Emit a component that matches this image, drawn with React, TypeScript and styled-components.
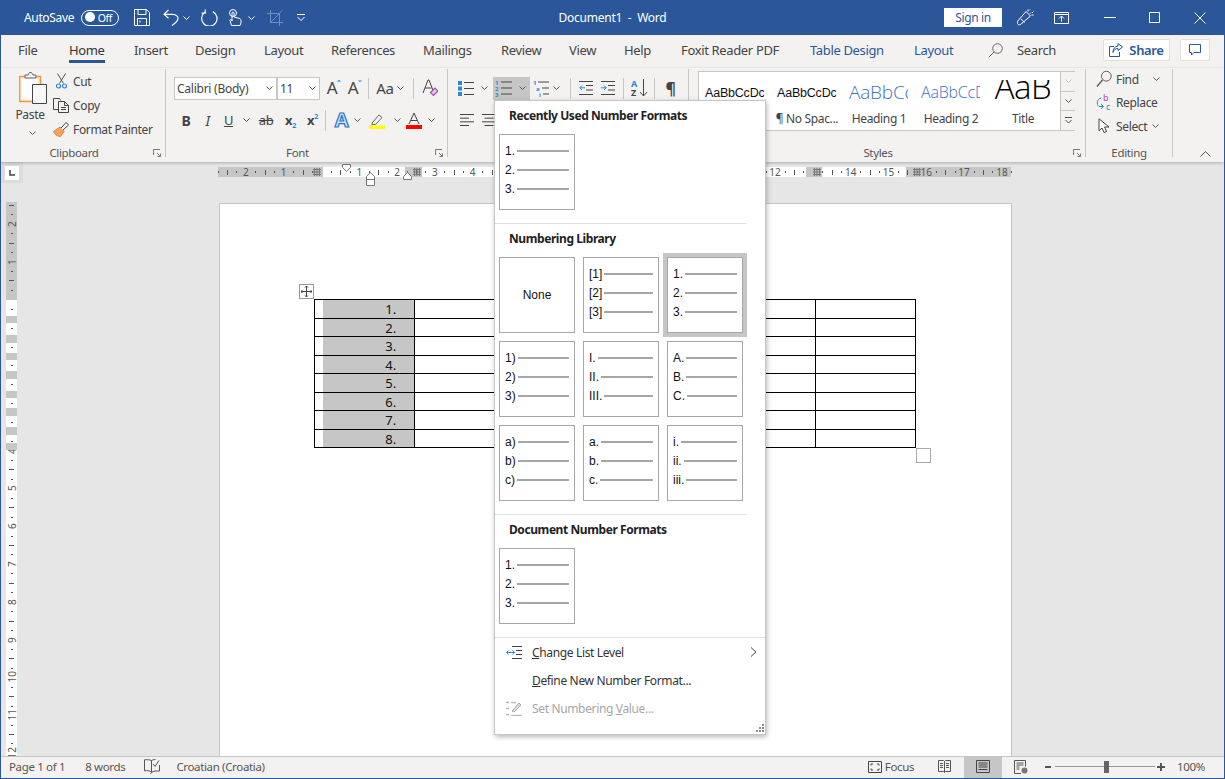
import {FC, ReactNode} from 'react'
import styled, {createGlobalStyle} from 'styled-components'

const BLUE = '#2b579a'
const RULE = '#c6c6c6'
const INK = '#444'

const GlobalStyle = createGlobalStyle`
  html, body {
    margin: 0;
    height: 100%;
    overflow: hidden;
    font-family: 'Noto Sans', 'Open Sans', sans-serif;
    font-size: 12px;
    letter-spacing: -0.35px;
    color: ${INK};
  }
  #root { height: 100%; }
`

const TABS = [
  {label: 'File', width: 51},
  {label: 'Home', width: 65, active: true},
  {label: 'Insert', width: 61},
  {label: 'Design', width: 69},
  {label: 'Layout', width: 67},
  {label: 'References', width: 92},
  {label: 'Mailings', width: 78},
  {label: 'Review', width: 68},
  {label: 'View', width: 55},
  {label: 'Help', width: 57},
  {label: 'Foxit Reader PDF', width: 129},
  {label: 'Table Design', width: 104, context: true},
  {label: 'Layout', width: 75, context: true},
]

const UNIT = 37.8
const H_ZERO = 103.5
const V_ZERO = 97.3
const H_WHITE = [[105, 187], [204, 588], [604, 688]]
const H_COLUMNS = [95, 195, 595, 695]
const V_TABLE_MARKERS = [[113.5, 121], [133, 140.5], [151, 158], [169, 176.5], [189, 196], [206, 214], [225, 232.5], [240.5, 247.5]]
const H_NUMBERS: Record<number, number> = {
  [-2]: 2, [-1]: 1, 1: 1, 2: 2, 3: 3, 4: 4, 12: 12, 14: 14, 15: 15, 16: 16, 17: 17, 18: 18,
}

const quarterSteps = (from: number, to: number) => {
  const steps: number[] = []
  for (let q = from; q <= to; q++) steps.push(q)
  return steps
}

const Chevron: FC<{$ml?: number; color?: string}> = ({$ml, color = '#555'}) => (
  <Ico $ml={$ml} width="7" height="4" viewBox="0 0 7 4" fill="none" stroke={color}>
    <path d="M.5.5 3.5 3.5 6.5.5" />
  </Ico>
)

const SmallLauncher: FC = () => (
  <Launcher width="8" height="8" viewBox="0 0 8 8" fill="none" stroke="#777">
    <path d="M.5 6V.5H7M4 4l3.5 3.5M7.5 4.5v3h-3" />
  </Launcher>
)

const Lines: FC<{rows: [number, number][]; width?: number; height?: number; $ml?: number}> = ({rows, width = 14, height = 14, $ml}) => (
  <Ico $ml={$ml} width={width} height={height} viewBox={`0 0 ${width} ${height}`} stroke="#444">
    {rows.map(([x, w], i) => (
      <path key={i} d={`M${x} ${1.5 + i * ((height - 3) / (rows.length - 1))}h${w}`} />
    ))}
  </Ico>
)

const PreviewTile: FC<{labels: string[]; selected?: boolean}> = ({labels, selected}) => (
  <Tile $selected={selected}>
    {labels.map((label) => (
      <TileRow key={label}>
        {label}
        <TileLine />
      </TileRow>
    ))}
  </Tile>
)

const Accel: FC<{children: ReactNode}> = ({children}) => <u>{children}</u>

const TitleBarView: FC = () => (
  <TitleBar>
    <Qat>
      <span>AutoSave</span>
      <Toggle><Knob />Off</Toggle>
      <Ico $ml={15} width="16" height="17" viewBox="0 0 16 17" fill="none" stroke="#fff">
        <path d="M.5.5h12l3 3v13H.5zM4 .5v5h8v-5M3.5 16.5v-7h9v7M6 11.5v2" />
      </Ico>
      <Ico $ml={13} width="16" height="17" viewBox="0 0 16 17" fill="none" stroke="#fff" strokeWidth="1.2">
        <path d="M5.5.8 1 5.3l4.5 4M1.3 5.3h8c3 0 5.7 1.6 5.7 4.2 0 2.9-3 4.9-6 7" />
      </Ico>
      <Chevron $ml={4} color="#fff" />
      <Ico $ml={11} width="17" height="17" viewBox="0 0 17 17" fill="none" stroke="#fff" strokeWidth="1.2">
        <path d="M11.8 2.6A7.7 7.7 0 1 1 4.2 3M4.2.6v3.6H.6" />
      </Ico>
      <Ico $ml={11} width="13" height="17" viewBox="0 0 13 17" fill="none" stroke="#fff">
        <circle cx="4" cy="4" r="3.5" />
        <path d="M2.5 16.5 1 11.5c0-1 1-1.400 1.800-.3L3 12V4c0-1.300 2-1.300 2 0v4l5 1.300c1.500.5 2 1.200 2 2.500v2l-1 2.700z" />
      </Ico>
      <Chevron $ml={6} color="#fff" />
      <Ico $ml={12} width="16" height="16" viewBox="0 0 16 16" fill="none" stroke="#6f8fc0">
        <path d="M3.500 0v12.500H16M0 3.500h12.500V16M12.500 3.500 3.500 12.500M15 .5l-2.500 3" />
      </Ico>
      <Ico $ml={14} width="8" height="7" viewBox="0 0 8 7" fill="none" stroke="#fff">
        <path d="M0 .5h8M.5 3l3.500 3.500L7.500 3" />
      </Ico>
    </Qat>
    <DocTitle>Document1  -  Word</DocTitle>
    <WindowTools>
      <SignIn>Sign in</SignIn>
      <Ico $ml={15} width="17" height="17" viewBox="0 0 17 17" fill="none" stroke="#fff">
        <path d="M.8 12 9 2.500l4.500 4.500L3.500 15.500c-3 1-3.500-1-2.700-3.500zM4 10l3.500 3.500M12 1.500l1-1M15 4l1.500-1.500M13 4.500l1-1M11 .5v2M16.500 6h-2" />
      </Ico>
      <Ico $ml={20} width="15" height="12" viewBox="0 0 15 12" fill="none" stroke="#fff">
        <path d="M.5.500h14v11H.500zM.5 2.500h14M7.500 9.500V4.500M5 6.500 7.500 4 10 6.500" />
      </Ico>
      <Ico $ml={35} width="12" height="1" viewBox="0 0 12 1" stroke="#fff"><path d="M0 .5h12" /></Ico>
      <Ico $ml={33} width="11" height="11" viewBox="0 0 11 11" fill="none" stroke="#fff"><path d="M.5.500h10v10H.500z" /></Ico>
      <Ico $ml={34} width="12" height="12" viewBox="0 0 12 12" fill="none" stroke="#fff"><path d="m.5.500 11 11M11.500.500l-11 11" /></Ico>
    </WindowTools>
  </TitleBar>
)

const TabBarView: FC = () => (
  <TabBar>
    {TABS.map((tab) => (
      <Tab key={tab.label + tab.width} $width={tab.width} $context={tab.context}>
        <TabLabel $active={tab.active}>{tab.label}</TabLabel>
      </Tab>
    ))}
    <SearchBox>
      <Ico width="15" height="15" viewBox="0 0 15 15" fill="none" stroke="#666">
        <circle cx="9.500" cy="5.500" r="4.800" />
        <path d="M6 9 .8 14.200" />
      </Ico>
      Search
    </SearchBox>
    <ShareButton>
      <Ico width="14" height="14" viewBox="0 0 14 14" fill="none" stroke={BLUE}>
        <path d="M5 3.500H.5v10h10V9M9 .5l4.500 3.500L9 7.500V5.500c-3 0-4.500 1.500-5 4 0-3.500 1.500-6 5-6.500z" />
      </Ico>
      Share
    </ShareButton>
    <CommentButton>
      <Ico width="12" height="12" viewBox="0 0 12 12" fill="none" stroke={BLUE}>
        <path d="M.5.500h11v8H5L2.500 11V8.500h-2z" />
      </Ico>
    </CommentButton>
  </TabBar>
)

const RibbonView: FC = () => (
  <Ribbon>
    <Group $width={165}>
      <ClipboardBody>
        <PasteColumn>
          <Ico $ml={11} width="28" height="32" viewBox="0 0 28 32" fill="none">
            <path d="M.5 4.500h21v25H.5z" fill="#fbe4c8" stroke="#ef9b3d" strokeWidth="1.500" />
            <path d="M2.500 6.500h17v21h-17z" fill="#fff" />
            <path d="M6 5V3h3l1.500-2.500h2L14 3h3v3H6z" fill="#f3f2f1" stroke="#666" />
            <path d="M13.500 12.500h14v19h-14z" fill="#f8f8f8" stroke="#444" />
          </Ico>
          <PasteLabel>Paste</PasteLabel>
          <Chevron $ml={21} />
        </PasteColumn>
        <ClipRows>
          <ClipRow>
            <ClipIcon>
              <svg width="11" height="16" viewBox="0 0 11 16" fill="none">
                <path d="M1.500.5 7.500 10.500M9.500.5l-6 10" stroke="#555" />
                <circle cx="2.500" cy="13" r="2" stroke="#2b88d8" strokeWidth="1.200" />
                <circle cx="8.500" cy="13" r="2" stroke="#2b88d8" strokeWidth="1.200" />
              </svg>
            </ClipIcon>
            Cut
          </ClipRow>
          <ClipRow>
            <ClipIcon>
              <svg width="16" height="15" viewBox="0 0 16 15" fill="none" stroke="#444">
                <path d="M5 11.500H.5V.5h6l1 2" />
                <path d="M5.500 3.500h6l4 4v7h-10zM11.500 3.500v4h4M8 9.500h5M8 11.500h5" />
              </svg>
            </ClipIcon>
            Copy
          </ClipRow>
          <ClipRow>
            <ClipIcon>
              <svg width="16" height="15" viewBox="0 0 16 15" fill="none">
                <path d="M.5 9.500 7 5l4 4.500L7.500 14.500c-3 0-6-2-7-5z" fill="#f7a35c" stroke="#e8833a" />
                <path d="m8 6 5-5.500 2.500 2.500L10 8" fill="#fff" stroke="#444" />
              </svg>
            </ClipIcon>
            Format Painter
          </ClipRow>
        </ClipRows>
      </ClipboardBody>
      <GroupLabel>Clipboard</GroupLabel>
      <SmallLauncher />
    </Group>

    <Group $width={282}>
      <ToolStack $left={8}>
        <ToolRow>
          <Combo $width={103}>Calibri (Body)<Chevron /></Combo>
          <Combo $width={43}>11<Chevron /></Combo>
          <Tool $ml={7} $w={13}><GrowA>A<Caret>ˆ</Caret></GrowA></Tool>
          <Tool $ml={8} $w={13}><GrowA>A<Caret>ˇ</Caret></GrowA></Tool>
          <ToolSep $ml={7} />
          <Tool $ml={8} $w={16} $size={15}>Aa</Tool>
          <Tool $ml={4} $w={7}><Chevron /></Tool>
          <ToolSep $ml={9} />
          <Tool $ml={8} $w={16}>
            <svg width="16" height="18" viewBox="0 0 16 18" fill="none">
              <path d="M1 14 6 1h1l5 13M3 9h6.500" stroke="#444" />
              <path d="m8.500 13.500 4.500-4.500 3 3-4.500 4.500z" fill="#e6c8ea" stroke="#a64dab" strokeWidth="1.200" />
            </svg>
          </Tool>
        </ToolRow>
        <ToolRow>
          <Tool $ml={8} $w={8} $size={14} $weight={700}>B</Tool>
          <Tool $ml={14} $w={7} $size={14} $italic>I</Tool>
          <Tool $ml={13} $w={9} $size={13} $underline>U</Tool>
          <Tool $ml={10} $w={7}><Chevron /></Tool>
          <Tool $ml={8} $w={16} $size={13} $strike>ab</Tool>
          <Tool $ml={11} $w={11}><Script>x<Sub>2</Sub></Script></Tool>
          <Tool $ml={11} $w={11}><Script>x<Sup>2</Sup></Script></Tool>
          <ToolSep $ml={7} />
          <Tool $ml={7} $w={17}><EffectA>A</EffectA></Tool>
          <Tool $ml={4} $w={7}><Chevron /></Tool>
          <Tool $ml={8} $w={16}>
            <svg width="16" height="17" viewBox="0 0 16 17" fill="none">
              <path d="m3 11 7-8 3 2.500-6.500 7H3.500zM3.500 12 2 13.500" stroke="#666" />
              <path d="M0 13.500h16V17H0z" fill="#ffff00" />
            </svg>
          </Tool>
          <Tool $ml={9} $w={7}><Chevron /></Tool>
          <Tool $ml={5} $w={16}>
            <svg width="16" height="17" viewBox="0 0 16 17" fill="none">
              <path d="m3 12 5-11 5 11M4.800 8.500h6.500" stroke="#444" />
              <path d="M0 13h16v4H0z" fill="#f00" />
            </svg>
          </Tool>
          <Tool $ml={6} $w={7}><Chevron /></Tool>
        </ToolRow>
      </ToolStack>
      <GroupLabel>Font</GroupLabel>
      <SmallLauncher />
    </Group>

    <Group $width={241}>
      <ToolStack $left={0}>
        <ToolRow>
          <Tool $ml={10} $w={16}>
            <svg width="16" height="15" viewBox="0 0 16 15" fill="none">
              <path d="M0 0h4v4H0zM0 5.500h4v4H0zM0 11h4v4H0z" fill="#2b88d8" />
              <path d="M6 1.500h10M6 7.500h10M6 13.500h10" stroke="#444" />
            </svg>
          </Tool>
          <Tool $ml={7} $w={7}><Chevron /></Tool>
          <ActiveTool>
            <svg width="17" height="19" viewBox="0 0 17 19" fill="none">
              <text x="0" y="6" fontSize="6" fontWeight="700" fill="#2b88d8">1</text>
              <text x="0" y="12" fontSize="6" fontWeight="700" fill="#2b88d8">2</text>
              <text x="0" y="18" fontSize="6" fontWeight="700" fill="#2b88d8">3</text>
              <path d="M6 3h11M6 9h11M6 15h11" stroke="#444" />
            </svg>
            <Chevron $ml={7} />
          </ActiveTool>
          <Tool $ml={3} $w={16}>
            <svg width="16" height="19" viewBox="0 0 16 19" fill="none">
              <text x="0" y="6" fontSize="6" fontWeight="700" fill="#2b88d8">1</text>
              <text x="3" y="12" fontSize="6" fontWeight="700" fill="#2b88d8">a</text>
              <text x="6" y="18" fontSize="6" fontWeight="700" fill="#2b88d8">i</text>
              <path d="M5 3h11M9 9h7M10 15h6" stroke="#444" />
            </svg>
          </Tool>
          <Tool $ml={4} $w={7}><Chevron /></Tool>
          <ToolSep $ml={10} />
          <Tool $ml={8} $w={14}>
            <svg width="14" height="14" viewBox="0 0 14 14" fill="none">
              <path d="M0 .5h14M7 4.500h7M7 9h7M0 13.500h14" stroke="#444" />
              <path d="M6 6.800H.8M3 4.500.8 6.800 3 9" stroke="#2b88d8" />
            </svg>
          </Tool>
          <Tool $ml={8} $w={14}>
            <svg width="14" height="14" viewBox="0 0 14 14" fill="none">
              <path d="M0 .5h14M7 4.500h7M7 9h7M0 13.500h14" stroke="#444" />
              <path d="M0 6.800h5.200M3 4.500l2.200 2.300L3 9" stroke="#2b88d8" />
            </svg>
          </Tool>
          <ToolSep $ml={8} />
          <Tool $ml={7} $w={17}>
            <svg width="17" height="20" viewBox="0 0 17 20" fill="none">
              <text x="0" y="9" fontSize="9" fontWeight="700" fill="#2b88d8">A</text>
              <text x="0" y="18" fontSize="9" fontWeight="700" fill="#444">Z</text>
              <path d="M12.500 1v16.500M9 14l3.500 4 3.500-4" stroke="#444" />
            </svg>
          </Tool>
          <ToolSep $ml={6} />
          <Tool $ml={10} $w={11} $size={16} $weight={700}>¶</Tool>
        </ToolRow>
        <ToolRow>
          <Lines $ml={12} rows={[[0, 14], [0, 9], [0, 14], [0, 9]]} />
          <Lines $ml={8} rows={[[0, 14], [2.5, 9], [0, 14], [2.5, 9]]} />
        </ToolRow>
      </ToolStack>
    </Group>

    <Group $width={397}>
      <Gallery>
        <StyleCell $sample="normal"><span>AaBbCcDc</span><span>¶ Normal</span></StyleCell>
        <StyleCell $sample="normal"><span>AaBbCcDc</span><span>¶ No Spac...</span></StyleCell>
        <StyleCell $sample="h1"><span>AaBbCc</span><span>Heading 1</span></StyleCell>
        <StyleCell $sample="h2"><span>AaBbCcD</span><span>Heading 2</span></StyleCell>
        <StyleCell $sample="title"><span>AaB</span><span>Title</span></StyleCell>
        <ScrollColumn>
          <ScrollButton><Chevron color="#c6c6c6" /></ScrollButton>
          <ScrollButton><Chevron /></ScrollButton>
          <ScrollButton>
            <svg width="7" height="7" viewBox="0 0 7 7" fill="none" stroke="#555"><path d="M0 .5h7M.5 3l3 3 3-3" /></svg>
          </ScrollButton>
        </ScrollColumn>
      </Gallery>
      <GroupLabel>Styles</GroupLabel>
      <SmallLauncher />
    </Group>

    <Group $width={87}>
      <EditRows>
        <EditRow>
          <ClipIcon>
            <svg width="17" height="18" viewBox="0 0 17 18" fill="none" stroke="#555">
              <circle cx="11" cy="6" r="5.200" />
              <path d="M7 10 1 17" strokeWidth="1.400" />
            </svg>
          </ClipIcon>
          Find<Chevron $ml={14} />
        </EditRow>
        <EditRow>
          <ClipIcon>
            <svg width="16" height="19" viewBox="0 0 16 19" fill="none">
              <text x="7" y="8" fontSize="9" fill="#a64dab">b</text>
              <text x="10" y="17" fontSize="9" fill="#2b88d8">c</text>
              <path d="M5 5C1 6 0 11 3 13.500h4M5 11l2.500 2.500L5 16" stroke="#2b88d8" />
            </svg>
          </ClipIcon>
          Replace
        </EditRow>
        <EditRow>
          <ClipIcon>
            <svg width="12" height="16" viewBox="0 0 12 16" fill="#fff" stroke="#444">
              <path d="M1 .8v12l3-2.800 2 4.500 2.500-1-2-4.500h4.500z" />
            </svg>
          </ClipIcon>
          Select<Chevron $ml={5} />
        </EditRow>
      </EditRows>
      <GroupLabel $centered>Editing</GroupLabel>
    </Group>

    <CollapseSlot>
      <Ico width="11" height="6" viewBox="0 0 11 6" fill="none" stroke="#555"><path d="m.5 5.500 5-5 5 5" /></Ico>
    </CollapseSlot>
  </Ribbon>
)

const HorizontalRuler: FC = () => (
  <HRuler>
    {H_WHITE.map(([from, to]) => (
      <HWhite key={from} style={{left: from, width: to - from}} />
    ))}
    {quarterSteps(-11, 73).map((q) => {
      const left = H_ZERO + (q / 4) * UNIT
      if (q % 4 === 0) {
        const n = H_NUMBERS[q / 4]
        return n ? <HNumber key={q} style={{left}}>{n}</HNumber> : null
      }
      return q % 2 === 0 ? <HTick key={q} style={{left}} /> : <HDot key={q} style={{left}} />
    })}
    {H_COLUMNS.map((left) => (
      <ColumnMark key={left} style={{left}} width="8" height="8" viewBox="0 0 8 8" stroke="#777" fill="none">
        <path d="M0 1.500h8M0 4h8M0 6.500h8M1.500 0v8M4 0v8M6.500 0v8" />
      </ColumnMark>
    ))}
    <FirstIndent width="9" height="8" viewBox="0 0 9 8" fill="#fff" stroke="#777">
      <path d="M.5.500h8v3l-4 4-4-4z" />
    </FirstIndent>
    <HangIndent width="9" height="14" viewBox="0 0 9 14" fill="#fff" stroke="#777">
      <path d="M.5 7.500v-3l4-4 4 4v3zM.5 7.500h8v6h-8z" />
    </HangIndent>
    <RightIndent width="9" height="8" viewBox="0 0 9 8" fill="#fff" stroke="#777">
      <path d="M.5 7.500v-3l4-4 4 4v3z" />
    </RightIndent>
  </HRuler>
)

const VerticalRuler: FC = () => (
  <VRuler>
    <VGrey style={{top: 0, height: 98}} />
    {quarterSteps(-10, 49).map((q) => {
      const top = V_ZERO + (q / 4) * UNIT
      if (q === 0) return null
      if (q % 4 === 0) return <VNumber key={q} style={{top}}>{Math.abs(q / 4)}</VNumber>
      return q % 2 === 0 ? <VTick key={q} style={{top}} /> : <VDot key={q} style={{top}} />
    })}
    {V_TABLE_MARKERS.map(([from, to]) => (
      <VGrey key={from} style={{top: from, height: to - from}} />
    ))}
  </VRuler>
)

const NumberMenu: FC = () => (
  <Menu>
    <MenuHeading>Recently Used Number Formats</MenuHeading>
    <TileGrid>
      <PreviewTile labels={['1.', '2.', '3.']} />
    </TileGrid>
    <MenuRule />
    <MenuHeading>Numbering Library</MenuHeading>
    <TileGrid>
      <NoneTile>None</NoneTile>
      <PreviewTile labels={['[1]', '[2]', '[3]']} />
      <PreviewTile labels={['1.', '2.', '3.']} selected />
      <PreviewTile labels={['1)', '2)', '3)']} />
      <PreviewTile labels={['I.', 'II.', 'III.']} />
      <PreviewTile labels={['A.', 'B.', 'C.']} />
      <PreviewTile labels={['a)', 'b)', 'c)']} />
      <PreviewTile labels={['a.', 'b.', 'c.']} />
      <PreviewTile labels={['i.', 'ii.', 'iii.']} />
    </TileGrid>
    <MenuRule />
    <MenuHeading>Document Number Formats</MenuHeading>
    <TileGrid>
      <PreviewTile labels={['1.', '2.', '3.']} />
    </TileGrid>
    <MenuRule $full />
    <MenuItem>
      <MenuIcon>
        <svg width="16" height="13" viewBox="0 0 16 13" fill="none">
          <path d="M6 .5h10M10 4.500h6M10 8.500h6M6 12.500h10" stroke="#444" />
          <path d="M.5 6.500h8M2.500 4.500l-2 2 2 2M6.500 4.500l2 2-2 2" stroke="#2b88d8" />
        </svg>
      </MenuIcon>
      <span><Accel>C</Accel>hange List Level</span>
      <SubArrow width="7" height="10" viewBox="0 0 7 10" fill="none" stroke="#444"><path d="m1 .5 5 4.500-5 4.500" /></SubArrow>
    </MenuItem>
    <MenuItem>
      <MenuIcon />
      <span><Accel>D</Accel>efine New Number Format...</span>
    </MenuItem>
    <MenuItem $disabled>
      <MenuIcon>
        <svg width="16" height="15" viewBox="0 0 16 15" fill="none">
          <path d="M0 1.500h3M0 7.500h3M0 13.500h3M5 14.500h11M5 1.500h5" stroke="#bbb" strokeWidth="1.500" />
          <path d="m6 10 7-8 2 2-7 7z" fill="#ddd" stroke="#aaa" />
        </svg>
      </MenuIcon>
      <span>Set Numbering <Accel>V</Accel>alue...</span>
    </MenuItem>
    <MenuFooter>
      <Ico width="8" height="8" viewBox="0 0 8 8" fill="#888">
        <path d="M6 0h2v2H6zM3 3h2v2H3zM6 3h2v2H6zM0 6h2v2H0zM3 6h2v2H3zM6 6h2v2H6z" />
      </Ico>
    </MenuFooter>
  </Menu>
)

const StatusBarView: FC = () => (
  <StatusBar>
    <StatusText $ml={8}>Page 1 of 1</StatusText>
    <StatusText $ml={20}>8 words</StatusText>
    <Ico $ml={19} width="16" height="15" viewBox="0 0 16 15" fill="none" stroke="#555">
      <path d="M7.500 1.500C6 .8 3 .5.500.8v11c2.500-.3 5.500 0 7 1.200v-11.500zM7.500 1.500c1-.7 2.500-1 4-1M15.500 6v6c-2.500-.3-6.500 0-8 1.500L6.500 15M9 5l2 2.500 4-6" />
    </Ico>
    <StatusText $ml={16}>Croatian (Croatia)</StatusText>
    <StatusRight>
      <Ico width="14" height="12" viewBox="0 0 14 12" fill="none" stroke="#444">
        <path d="M.5.500h13v11H.500zM3 4.500V3h2M9 3h2v1.500M3 7.500V9h2M11 7.500V9H9" />
      </Ico>
      <StatusText $ml={3}>Focus</StatusText>
      <Ico $ml={24} width="13" height="14" viewBox="0 0 13 14" fill="none" stroke="#555">
        <path d="M.5.500h5l1 1 1-1h5v11h-5l-1 1-1-1h-5zM6.500 1.500v11M2 3.500h3M2 5.500h3M2 7.500h3M8 3.500h3M8 5.500h3M8 7.500h3" />
      </Ico>
      <ViewActive>
        <svg width="14" height="13" viewBox="0 0 14 13" fill="none" stroke="#444">
          <path d="M.5.500h13v12H.500zM2.500 3h9M2.500 5h9M2.500 7h9M2.500 9.500h9" />
        </svg>
      </ViewActive>
      <Ico $ml={12} width="14" height="14" viewBox="0 0 14 14" fill="none" stroke="#555">
        <path d="M7 13.500H.5V.500h11v6M2.500 3h7M2.500 5h7M2.500 7h3M2.500 9h3" />
        <circle cx="10.500" cy="10.500" r="3" fill="#777" stroke="none" />
      </Ico>
      <ZoomMinus />
      <ZoomTrack $w={49} />
      <ZoomThumb />
      <ZoomTrack $w={46} />
      <ZoomPlus />
      <StatusText $ml={12}>100%</StatusText>
    </StatusRight>
  </StatusBar>
)

export default function App() {
  return (
    <Window>
      <GlobalStyle />
      <TitleBarView />
      <TabBarView />
      <RibbonView />
      <Workspace>
        <LeftRail>
          <TabStop>
            <TabStopFace>
              <svg width="6" height="6" viewBox="0 0 6 6" fill="none" stroke="#444" strokeWidth="1.500"><path d="M1 0v5h5" /></svg>
            </TabStopFace>
          </TabStop>
          <VerticalRuler />
        </LeftRail>
        <Canvas>
          <HorizontalRuler />
          <Page>
            <DocTable>
              <MoveHandle>
                <svg width="11" height="11" viewBox="0 0 11 11" fill="none" stroke="#444">
                  <path d="M5.500 0v11M0 5.500h11M4 1.500 5.500 0 7 1.500M4 9.500 5.500 11 7 9.500M1.500 4 0 5.500 1.500 7M9.500 4 11 5.500 9.500 7" />
                </svg>
              </MoveHandle>
              {[1, 2, 3, 4, 5, 6, 7, 8].map((n) => (
                <TableRow key={n}>
                  <NumberCell><NumberFill>{n}.</NumberFill></NumberCell>
                  <Cell /><Cell /><Cell /><Cell /><Cell />
                </TableRow>
              ))}
              <ResizeHandle />
            </DocTable>
          </Page>
        </Canvas>
      </Workspace>
      <StatusBarView />
      <NumberMenu />
    </Window>
  )
}

const Window = styled.div`
  position: relative;
  box-sizing: border-box;
  display: flex;
  flex-direction: column;
  height: 100vh;
  overflow: hidden;
  border: 1px solid ${BLUE};
  border-top: 0;
  background: #e6e6e6;
`

const Ico = styled.svg<{$ml?: number}>`
  display: block;
  flex: none;
  margin-left: ${(p) => p.$ml ?? 0}px;
`

const TitleBar = styled.header`
  display: grid;
  grid-template-columns: 1fr auto 1fr;
  align-items: center;
  height: 35px;
  flex: none;
  margin: 0 -1px;
  background: ${BLUE};
  color: #fff;
`

const Qat = styled.div`
  display: flex;
  align-items: center;
  padding-left: 24px;
  font-size: 12px;
`

const Toggle = styled.span`
  position: relative;
  box-sizing: border-box;
  display: flex;
  align-items: center;
  justify-content: flex-end;
  width: 38px;
  height: 16px;
  margin-left: 7px;
  padding-right: 6px;
  border: 1.500px solid #fff;
  border-radius: 8px;
  font-size: 10.500px;
`

const Knob = styled.i`
  position: absolute;
  left: 3px;
  top: 1.500px;
  width: 10px;
  height: 10px;
  border-radius: 50%;
  background: #fff;
`

const DocTitle = styled.div`
  font-size: 12px;
  white-space: pre;
  letter-spacing: -0.25px;
`

const WindowTools = styled.div`
  display: flex;
  align-items: center;
  justify-content: flex-end;
  padding-right: 19px;
`

const SignIn = styled.span`
  display: flex;
  align-items: center;
  justify-content: center;
  width: 58px;
  height: 19px;
  background: #fff;
  color: ${BLUE};
  font-size: 12px;
`

const TabBar = styled.nav`
  display: flex;
  align-items: flex-start;
  flex: none;
  height: 33px;
  padding: 6px 0 0 17px;
  box-sizing: border-box;
  background: #f3f2f1;
  font-size: 13px;
`

const Tab = styled.div<{$width: number; $context?: boolean}>`
  flex: none;
  width: ${(p) => p.$width}px;
  color: ${(p) => (p.$context ? BLUE : INK)};
`

const TabLabel = styled.span<{$active?: boolean}>`
  display: inline-block;
  line-height: 19px;
  border-bottom: 3px solid ${(p) => (p.$active ? BLUE : 'transparent')};
  color: ${(p) => (p.$active ? '#333' : 'inherit')};
`

const SearchBox = styled.div`
  display: flex;
  align-items: center;
  gap: 14px;
  flex: none;
  width: 115px;
  height: 18px;
  margin-left: -1px;
`

const ShareButton = styled.button`
  display: flex;
  align-items: center;
  justify-content: center;
  gap: 6px;
  box-sizing: border-box;
  flex: none;
  width: 67px;
  height: 22px;
  margin-top: -2px;
  padding: 0;
  border: 1px solid #e1dfdd;
  border-radius: 2px;
  background: #fff;
  color: ${BLUE};
  font: 600 13px 'Noto Sans', sans-serif;
  letter-spacing: -0.35px;
`

const CommentButton = styled.button`
  display: flex;
  align-items: center;
  justify-content: center;
  box-sizing: border-box;
  flex: none;
  width: 30px;
  height: 22px;
  margin: -2px 0 0 10px;
  padding: 0;
  border: 1px solid #e1dfdd;
  border-radius: 2px;
  background: #fff;
`

const Ribbon = styled.section`
  position: relative;
  z-index: 1;
  display: flex;
  flex: none;
  height: 94px;
  box-shadow: 0 1px 3px rgba(0, 0, 0, 0.25);
  background: #f3f2f1;
`

const Group = styled.div<{$width: number}>`
  position: relative;
  display: flex;
  flex-direction: column;
  box-sizing: border-box;
  flex: none;
  width: ${(p) => p.$width}px;
  height: 88px;
  margin-top: 1px;
  border-right: 1px solid ${RULE};
`

const GroupLabel = styled.div<{$centered?: boolean}>`
  flex: none;
  height: 11px;
  padding-right: ${(p) => (p.$centered ? 0 : 18)}px;
  line-height: 14px;
  text-align: center;
  font-size: 11.500px;
  color: #555;
`

const Launcher = styled.svg`
  position: absolute;
  right: 4px;
  bottom: 0;
`

const ClipboardBody = styled.div`
  display: flex;
  flex: 1;
`

const PasteColumn = styled.div`
  flex: none;
  width: 52px;
  padding: 3px 0 0 7px;
  box-sizing: border-box;
`

const PasteLabel = styled.div`
  width: 32px;
  margin: 2px 0 8px 6px;
  line-height: 17px;
  text-align: center;
`

const ClipRows = styled.div`
  display: flex;
  flex-direction: column;
`

const ClipRow = styled.div`
  display: flex;
  align-items: center;
  height: 24px;
  white-space: nowrap;
`

const ClipIcon = styled.span`
  display: flex;
  align-items: center;
  justify-content: center;
  flex: none;
  width: 16px;
  margin-right: 4px;
`

const ToolStack = styled.div<{$left: number}>`
  display: flex;
  flex: 1;
  flex-direction: column;
  gap: 10px;
  padding: 8px 0 0 ${(p) => p.$left}px;
`

const ToolRow = styled.div`
  display: flex;
  align-items: center;
  height: 22px;
`

const Combo = styled.div<{$width: number}>`
  display: flex;
  align-items: center;
  justify-content: space-between;
  box-sizing: border-box;
  flex: none;
  width: ${(p) => p.$width}px;
  height: 23px;
  padding: 0 3px 0 2px;
  border: 1px solid ${RULE};
  background: #fff;
  font-size: 12px;
  letter-spacing: -0.25px;
  white-space: nowrap;
`

const Tool = styled.span<{$ml?: number; $w: number; $size?: number; $weight?: number; $italic?: boolean; $underline?: boolean; $strike?: boolean}>`
  display: flex;
  align-items: center;
  justify-content: center;
  flex: none;
  width: ${(p) => p.$w}px;
  margin-left: ${(p) => p.$ml ?? 0}px;
  font-size: ${(p) => p.$size ?? 12}px;
  font-weight: ${(p) => p.$weight ?? 400};
  font-style: ${(p) => (p.$italic ? 'italic' : 'normal')};
  text-decoration: ${(p) => (p.$underline ? 'underline' : p.$strike ? 'line-through' : 'none')};
`

const ToolSep = styled.i<{$ml: number}>`
  flex: none;
  width: 1px;
  height: 21px;
  margin-left: ${(p) => p.$ml}px;
  background: ${RULE};
`

const GrowA = styled.span`
  position: relative;
  font-size: 17px;
  line-height: 18px;
  margin-left: -3px;
`

const Caret = styled.span`
  position: absolute;
  top: -3px;
  left: 10px;
  font-size: 10px;
  color: #2b88d8;
`

const Script = styled.span`
  font-size: 13px;
  font-weight: 700;
`

const Sub = styled.sub`
  font-size: 7px;
  font-weight: 700;
  color: #2b88d8;
  vertical-align: -3px;
  line-height: 0;
`

const Sup = styled.sup`
  font-size: 7px;
  font-weight: 700;
  color: #2b88d8;
  vertical-align: 6px;
  line-height: 0;
`

const EffectA = styled.span`
  font-size: 20px;
  font-weight: 700;
  line-height: 20px;
  color: #cfe4f7;
  -webkit-text-stroke: 1.200px #1f78c8;
`

const ActiveTool = styled.span`
  display: flex;
  align-items: center;
  box-sizing: border-box;
  flex: none;
  width: 37px;
  height: 23px;
  margin-left: 5px;
  padding-left: 2px;
  background: ${RULE};
`

const Gallery = styled.div`
  display: flex;
  box-sizing: border-box;
  flex: none;
  width: 377px;
  height: 60px;
  margin: 2px 0 15px 9px;
  border: 1px solid ${RULE};
  background: #fff;
`

const SAMPLE = {
  normal: 'font: 12.500px/24px "Liberation Sans", sans-serif; color: #111; width: 65px; padding-left: 6px; padding-top: 9px;',
  h1: 'font: 300 19px/30px "Open Sans", sans-serif; color: #3f72c4; width: 65px; padding-left: 6px; padding-top: 5px;',
  h2: 'font: 300 16px/30px "Open Sans", sans-serif; color: #3f72c4; width: 65px; padding-left: 6px; padding-top: 5px;',
  title: 'font: 300 33px/13px "Open Sans", sans-serif; color: #000; text-align: center; letter-spacing: -0.500px; height: 21px; margin: 8px 0 6px;',
}

const StyleCell = styled.div<{$sample: keyof typeof SAMPLE}>`
  display: flex;
  flex-direction: column;
  flex: none;
  width: 72px;
  overflow: hidden;

  & > span:first-child {
    display: block;
    box-sizing: border-box;
    height: 35px;
    overflow: hidden;
    white-space: nowrap;
    letter-spacing: -0.2px;
    ${(p) => SAMPLE[p.$sample]}
  }

  & > span:last-child {
    margin-top: 3px;
    text-align: center;
    white-space: nowrap;
    line-height: 17px;
  }
`

const ScrollColumn = styled.div`
  display: flex;
  flex-direction: column;
  flex: none;
  margin-left: 1px;
  width: 15px;
`

const ScrollButton = styled.div`
  display: flex;
  flex: 1;
  align-items: center;
  justify-content: center;
  border-left: 1px solid ${RULE};
  background: #f3f2f1;

  & + & {
    border-top: 1px solid ${RULE};
  }
`

const EditRows = styled.div`
  display: flex;
  flex-direction: column;
  flex: 1;
  gap: 3.500px;
  padding-left: 10px;
`

const EditRow = styled.div`
  display: flex;
  align-items: center;
  height: 20px;
  white-space: nowrap;
`

const CollapseSlot = styled.div`
  display: flex;
  align-items: flex-end;
  justify-content: flex-end;
  flex: 1;
  padding: 0 13px 5px 0;
`

const Workspace = styled.main`
  display: flex;
  flex: 1;
  min-height: 0;
`

const LeftRail = styled.div`
  display: flex;
  flex-direction: column;
  flex: none;
  width: 22px;
`

const TabStop = styled.div`
  display: flex;
  align-items: center;
  justify-content: center;
  flex: none;
  height: 21px;
  background: #dcdcdc;
`

const TabStopFace = styled.div`
  display: flex;
  align-items: center;
  justify-content: center;
  width: 14px;
  height: 14px;
  background: #fff;
`

const VRuler = styled.div`
  position: relative;
  flex: 1;
  width: 11px;
  margin: 19px 0 0 5px;
  overflow: hidden;
  background: #fff;
`

const VGrey = styled.div`
  position: absolute;
  left: 0;
  width: 100%;
  background: ${RULE};
`

const VNumber = styled.span`
  position: absolute;
  left: 0;
  width: 11px;
  height: 10px;
  margin-top: -5px;
  font-size: 10px;
  line-height: 10px;
  text-align: center;
  letter-spacing: 0;
  color: #555;
  transform: rotate(-90deg);
`

const VTick = styled.i`
  position: absolute;
  left: 3px;
  width: 5px;
  height: 1px;
  background: #555;
`

const VDot = styled.i`
  position: absolute;
  left: 5px;
  width: 2px;
  height: 1px;
  background: #555;
`

const Canvas = styled.div`
  display: flex;
  flex-direction: column;
  flex: 1;
  min-width: 0;
`

const HRuler = styled.div`
  position: relative;
  flex: none;
  width: 793px;
  height: 10px;
  margin: 5px 0 0 195px;
  background: ${RULE};
`

const HWhite = styled.div`
  position: absolute;
  top: 0;
  height: 100%;
  background: #fff;
`

const HNumber = styled.span`
  position: absolute;
  top: 0;
  width: 14px;
  margin-left: -7px;
  font-size: 10px;
  line-height: 10px;
  text-align: center;
  letter-spacing: 0;
  color: #555;
`

const HTick = styled.i`
  position: absolute;
  top: 3px;
  width: 1px;
  height: 5px;
  background: #555;
`

const HDot = styled.i`
  position: absolute;
  top: 4px;
  width: 1px;
  height: 2px;
  background: #555;
`

const ColumnMark = styled.svg`
  position: absolute;
  top: 1px;
`

const FirstIndent = styled.svg`
  position: absolute;
  left: 124px;
  top: -3px;
`

const HangIndent = styled.svg`
  position: absolute;
  left: 148px;
  top: 5px;
`

const RightIndent = styled.svg`
  position: absolute;
  left: 185px;
  top: 5px;
`

const Page = styled.div`
  flex: 1;
  box-sizing: border-box;
  width: 793px;
  margin: 26px 0 0 196px;
  padding: 95px 0 0 94px;
  border: 1px solid ${RULE};
  border-bottom: 0;
  background: #fff;
`

const DocTable = styled.div`
  position: relative;
  display: grid;
  grid-template-rows: repeat(4, 19px 18px);
  width: 602px;
  box-sizing: border-box;
  border: solid #000;
  border-width: 1px 0 0 1px;
`

const TableRow = styled.div`
  display: grid;
  grid-template-columns: repeat(6, 1fr);
  grid-template-rows: minmax(0, 1fr);
`

const Cell = styled.div`
  box-sizing: border-box;
  min-height: 0;
  border: solid #000;
  border-width: 0 1px 1px 0;
`

const NumberCell = styled(Cell)`
  padding-left: 8px;
`

const NumberFill = styled.div`
  box-sizing: border-box;
  height: 100%;
  padding: 1px 18px 0 0;
  background: #c6c6c6;
  text-align: right;
  font-size: 13px;
  line-height: 16px;
  letter-spacing: 0;
  color: #111;
`

const MoveHandle = styled.div`
  position: absolute;
  left: -16px;
  top: -16px;
  display: flex;
  align-items: center;
  justify-content: center;
  box-sizing: border-box;
  width: 15px;
  height: 15px;
  border: 1px solid #999;
  background: #fff;
`

const ResizeHandle = styled.div`
  position: absolute;
  left: 601px;
  top: 148px;
  box-sizing: border-box;
  width: 15px;
  height: 15px;
  border: 1px solid #aaa;
  background: #fff;
`

const Menu = styled.aside`
  position: absolute;
  z-index: 5;
  left: 493px;
  top: 100px;
  box-sizing: border-box;
  width: 272px;
  height: 635px;
  border: 1px solid #c6c6c6;
  background: #fff;
  box-shadow: 1px 2px 5px rgba(0, 0, 0, 0.28);
  color: #333;
`

const MenuHeading = styled.div`
  padding-left: 14px;
  height: 28px;
  line-height: 29px;
  font-weight: 700;
  letter-spacing: -0.42px;
  color: #222;
`

const TileGrid = styled.div`
  display: grid;
  grid-template-columns: repeat(3, 76px);
  gap: 8px;
  padding: 5px 4px 13px;
`

const Tile = styled.div<{$selected?: boolean}>`
  box-sizing: border-box;
  width: 76px;
  height: 76px;
  padding: 6px 5px 0;
  border: 1px solid #a6a6a6;
  background: #fff;
  box-shadow: ${(p) => (p.$selected ? '0 0 0 4px #c6c6c6' : 'none')};
  font-family: 'Liberation Sans', sans-serif;
  letter-spacing: 0;
  color: #111;
`

const NoneTile = styled(Tile)`
  display: flex;
  align-items: center;
  justify-content: center;
  padding: 0;
`

const TileRow = styled.div`
  display: flex;
  align-items: center;
  height: 19px;
`

const TileLine = styled.i`
  flex: 1;
  height: 2px;
  margin-left: 2px;
  background: #a6a6a6;
`

const MenuRule = styled.div<{$full?: boolean}>`
  width: ${(p) => (p.$full ? '100%' : '252px')};
  height: 1px;
  background: #e1e1e1;
`

const MenuItem = styled.div<{$disabled?: boolean}>`
  position: relative;
  display: flex;
  align-items: center;
  height: 28px;
  color: ${(p) => (p.$disabled ? '#a6a6a6' : '#333')};

  &:first-of-type {
    margin-top: 1px;
  }
`

const MenuIcon = styled.span`
  display: flex;
  justify-content: center;
  flex: none;
  width: 37px;
`

const SubArrow = styled.svg`
  position: absolute;
  right: 8px;
  top: 9px;
`

const MenuFooter = styled.div`
  display: flex;
  justify-content: flex-end;
  padding: 2px 1px 0 0;
`

const StatusBar = styled.footer`
  position: relative;
  display: flex;
  align-items: center;
  flex: none;
  box-sizing: border-box;
  height: 22px;
  padding-bottom: 2px;
  border-top: 1px solid ${RULE};
  background: #f3f2f1;
  color: #555;
`

const StatusText = styled.span<{$ml?: number}>`
  margin-left: ${(p) => p.$ml ?? 0}px;
  font-size: 11.500px;
  white-space: nowrap;
`

const StatusRight = styled.div`
  display: flex;
  align-items: center;
  height: 100%;
  margin-left: auto;
  padding-right: 19px;
`

const ViewActive = styled.span`
  display: flex;
  align-items: center;
  justify-content: center;
  align-self: flex-start;
  box-sizing: border-box;
  width: 38px;
  height: 21px;
  margin-left: 13px;
  padding-bottom: 2px;
  background: ${RULE};
`

const ZoomMinus = styled.i`
  flex: none;
  width: 6px;
  height: 2px;
  margin: 0 4px 0 17px;
  background: #555;
`

const ZoomTrack = styled.i<{$w: number}>`
  flex: none;
  width: ${(p) => p.$w}px;
  height: 1px;
  background: #999;
`

const ZoomThumb = styled.i`
  flex: none;
  width: 5px;
  height: 12px;
  background: #666;
`

const ZoomPlus = styled.i`
  position: relative;
  flex: none;
  width: 8px;
  height: 2px;
  margin-left: 2px;
  background: #555;

  &::after {
    content: '';
    position: absolute;
    left: 3px;
    top: -3px;
    width: 2px;
    height: 8px;
    background: #555;
  }
`
